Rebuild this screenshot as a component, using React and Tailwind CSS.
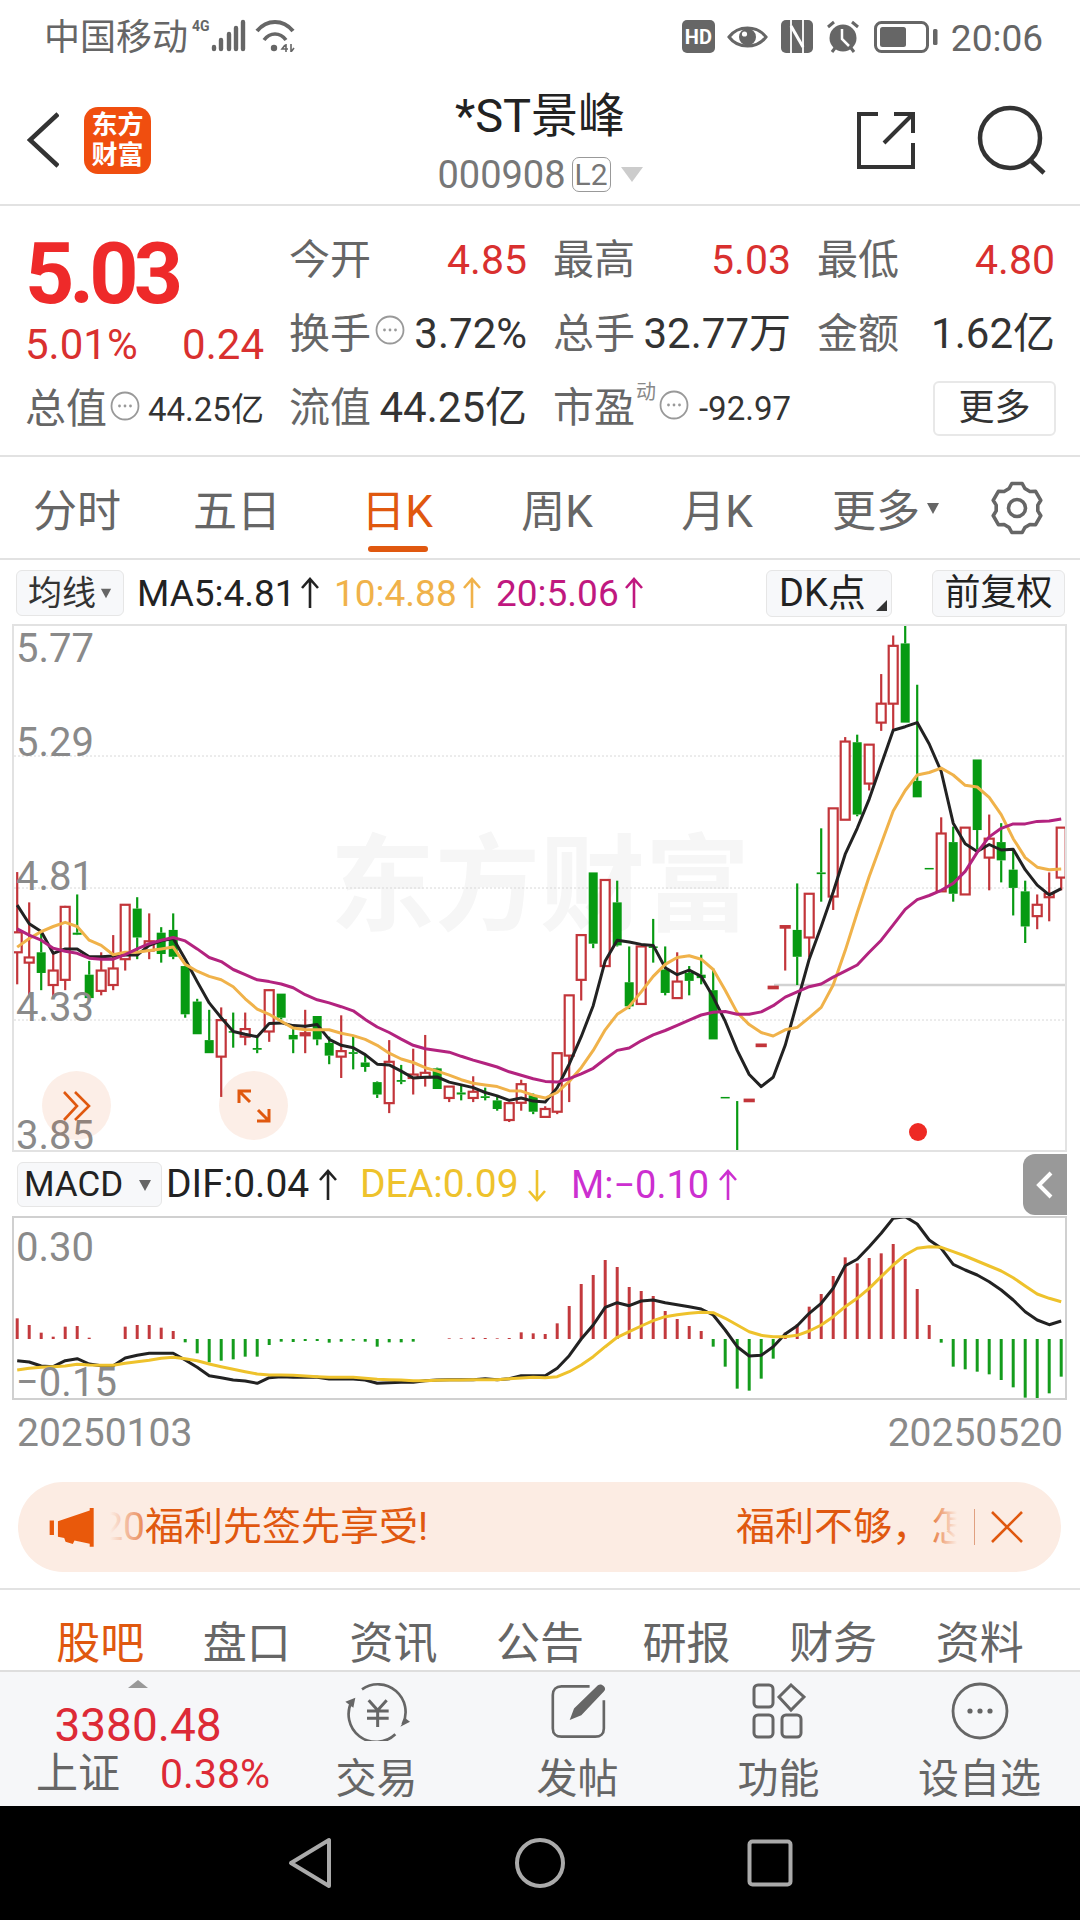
const RED = "#c2353a";
const GREEN = "#079a12";

// candles: [color, high, low, bodyTop, bodyBottom], measured in zoomed px
const candles = [
  ["r", 732, 1058, 907, 965], ["r", 820, 1090, 980, 995], ["g", 905, 1075, 965, 1025], ["r", 965, 1095, 1018, 1060],
  ["r", 830, 1075, 833, 1045], ["g", 797, 915, 908, 914], ["g", 990, 1100, 1030, 1098], ["r", 965, 1090, 1018, 1077],
  ["r", 915, 1075, 1012, 1060], ["r", 827, 1018, 827, 985], ["g", 805, 985, 838, 922], ["r", 852, 985, 933, 960],
  ["g", 892, 995, 908, 970], ["g", 852, 985, 900, 978], ["g", 1005, 1155, 1005, 1145], ["g", 1100, 1203, 1108, 1203],
  ["g", 1132, 1258, 1220, 1258], ["r", 1125, 1385, 1162, 1268], ["g", 1140, 1242, 1194, 1198], ["r", 1140, 1235, 1188, 1210],
  ["g", 1205, 1258, 1243, 1248], ["r", 1073, 1225, 1075, 1195], ["g", 1085, 1160, 1085, 1155], ["g", 1185, 1258, 1205, 1218],
  ["r", 1132, 1258, 1200, 1206], ["g", 1150, 1235, 1150, 1218], ["g", 1210, 1290, 1228, 1265], ["r", 1148, 1330, 1252, 1268],
  ["g", 1205, 1305, 1255, 1260], ["g", 1260, 1312, 1285, 1298], ["g", 1340, 1388, 1342, 1378], ["r", 1220, 1432, 1283, 1403],
  ["g", 1292, 1348, 1336, 1341], ["r", 1245, 1378, 1320, 1330], ["r", 1205, 1355, 1315, 1328], ["g", 1300, 1362, 1302, 1362],
  ["r", 1355, 1400, 1355, 1388], ["g", 1350, 1395, 1372, 1378], ["r", 1325, 1400, 1370, 1388], ["g", 1358, 1395, 1383, 1388],
  ["g", 1385, 1425, 1395, 1420], ["r", 1403, 1458, 1403, 1452], ["r", 1335, 1425, 1348, 1402], ["g", 1375, 1435, 1380, 1428],
  ["r", 1412, 1443, 1420, 1443], ["r", 1258, 1435, 1258, 1428], ["r", 1090, 1400, 1090, 1265], ["r", 915, 1105, 915, 1045],
  ["g", 733, 953, 733, 940], ["r", 755, 1005, 755, 1005], ["g", 757, 948, 820, 945], ["g", 948, 1130, 1052, 1122],
  ["r", 948, 1115, 948, 1115], ["g", 868, 995, 948, 952], ["g", 948, 1090, 1015, 1083], ["r", 965, 1100, 1050, 1098],
  ["g", 1005, 1090, 1025, 1048], ["g", 972, 1058, 1030, 1040], ["g", 1012, 1218, 1075, 1218], ["g", 1385, 1389, 1385, 1389],
  ["g", 1397, 1545, 1543, 1545], ["r", 1393, 1397, 1393, 1397], ["r", 1233, 1237, 1233, 1237], ["r", 1065, 1069, 1065, 1069],
  ["r", 890, 1018, 889, 891], ["g", 765, 1060, 900, 978], ["r", 795, 980, 795, 922], ["g", 605, 818, 733, 738],
  ["r", 547, 842, 547, 803], ["r", 340, 580, 353, 580], ["g", 333, 570, 355, 565], ["r", 362, 495, 362, 475],
  ["r", 157, 322, 243, 298], ["r", 45, 320, 75, 243], ["g", 13, 298, 68, 298], ["g", 188, 515, 467, 515],
  ["g", 720, 724, 720, 724], ["r", 573, 788, 620, 788], ["g", 600, 818, 645, 795], ["r", 603, 797, 603, 797],
  ["g", 405, 665, 405, 610], ["r", 565, 785, 635, 690], ["g", 590, 762, 645, 698], ["g", 670, 858, 725, 778],
  ["g", 757, 938, 788, 890], ["r", 797, 898, 827, 860], ["r", 733, 875, 795, 805], ["r", 603, 785, 603, 748],
];

const ma5 = [828, 882, 905, 968, 955, 955, 978, 978, 976, 973, 973, 945, 932, 925, 985, 1050, 1112, 1155, 1195, 1203, 1210, 1172, 1170, 1178, 1180, 1175, 1218, 1235, 1242, 1262, 1290, 1292, 1310, 1330, 1328, 1327, 1342, 1350, 1358, 1372, 1382, 1395, 1388, 1397, 1400, 1358, 1290, 1210, 1120, 990, 930, 935, 942, 945, 1010, 1030, 1017, 1035, 1095, 1165, 1250, 1320, 1355, 1328, 1235, 1110, 985, 890, 790, 680, 605, 520, 420, 320, 310, 298, 360, 440, 590, 650, 672, 652, 668, 666, 725, 770, 798, 780];
const ma10 = [950, 925, 905, 890, 878, 890, 930, 945, 972, 965, 965, 960, 955, 950, 1000, 1020, 1035, 1045, 1065, 1100, 1130, 1145, 1165, 1185, 1190, 1190, 1190, 1200, 1207, 1218, 1235, 1258, 1275, 1285, 1300, 1310, 1322, 1335, 1345, 1350, 1355, 1367, 1368, 1380, 1388, 1372, 1340, 1300, 1250, 1190, 1145, 1122, 1080, 1035, 1000, 980, 975, 985, 1015, 1075, 1140, 1175, 1198, 1208, 1190, 1183, 1155, 1125, 1060, 960, 850, 745, 650, 555, 495, 450, 443, 430, 450, 480, 485, 515, 565, 635, 690, 718, 725, 723];
const ma20 = [897, 915, 930, 953, 962, 968, 982, 985, 985, 972, 955, 940, 930, 922, 932, 955, 980, 992, 1015, 1030, 1045, 1050, 1057, 1068, 1088, 1103, 1112, 1123, 1135, 1160, 1182, 1198, 1217, 1235, 1245, 1250, 1255, 1267, 1278, 1288, 1298, 1312, 1322, 1332, 1340, 1342, 1332, 1318, 1302, 1275, 1250, 1243, 1222, 1205, 1192, 1177, 1162, 1147, 1139, 1137, 1145, 1145, 1138, 1120, 1095, 1080, 1065, 1057, 1037, 1020, 1002, 965, 930, 885, 840, 812, 800, 785, 765, 730, 675, 630, 605, 592, 592, 585, 584, 578];

// macd tips, zoomed px; null = no bar
const macdBars = [505, 525, 548, 560, 530, 528, 563, null, null, 530, 525, 525, 533, 543, 577, 610, 637, 632, 628, 620, 620, 585, 575, 576, 573, 573, 578, 575, 572, 575, 590, 577, 577, 575, null, null, 565, 565, 563, 564, 565, 564, 547, 550, 552, 520, 468, 402, 375, 330, 351, 411, 423, 438, 483, 507, 528, 543, 590, 650, 716, 722, 686, 626, 548, 523, 470, 432, 378, 322, 340, 324, 310, 282, 327, 417, 525, 578, 650, 658, 665, 673, 690, 712, 743, 747, 730, 680];
const dif = [632, 636, 648, 650, 632, 626, 642, 647, 647, 624, 616, 610, 610, 610, 630, 652, 677, 683, 690, 693, 700, 683, 680, 682, 682, 682, 687, 687, 687, 690, 700, 698, 697, 697, 692, 690, 689, 689, 689, 686, 689, 686, 677, 677, 677, 655, 617, 567, 525, 472, 458, 467, 453, 450, 458, 464, 470, 477, 495, 540, 590, 618, 616, 590, 552, 527, 490, 460, 415, 347, 328, 290, 250, 205, 200, 222, 270, 295, 343, 360, 375, 395, 420, 450, 485, 510, 524, 513];
const dea = [660, 655, 652, 650, 648, 643, 645, 646, 646, 640, 635, 631, 625, 622, 626, 632, 642, 650, 658, 665, 672, 675, 675, 676, 678, 680, 682, 682, 682, 685, 688, 689, 690, 692, 692, 691, 690, 690, 689, 689, 689, 686, 684, 682, 683, 680, 665, 645, 620, 590, 562, 545, 528, 512, 500, 494, 490, 487, 488, 505, 525, 545, 556, 560, 560, 556, 543, 525, 500, 470, 445, 415, 380, 345, 315, 295, 290, 292, 305, 318, 333, 348, 363, 383, 408, 432, 445, 455];

const xAt = (i) => 17.2 + 12 * i;
const kY = (z) => 620 + z / 2.904;
const mY = (z) => 1150 + z / 3;
const pts = (arr, toY) => arr.map((v, i) => `${xAt(i)},${toY(v).toFixed(1)}`).join(" ");

// six-tooth cog outline around 0,0
const gearPath = (() => {
  const p = [];
  for (let k = 0; k < 6; k++) {
    const a = -90 + 60 * k;
    [[21, -22], [25, -12], [25, 12], [21, 22]].forEach(([r, d]) => {
      const t = ((a + d) * Math.PI) / 180;
      p.push(`${(r * Math.cos(t)).toFixed(1)} ${(r * Math.sin(t)).toFixed(1)}`);
    });
  }
  return `M${p.join("L")}Z`;
})();

function KChart() {
  return (
    <svg width="1051" height="524" viewBox="14 626 1051 524" className="relative block">
      {[756, 888, 1020].map((y) => (
        <line key={y} x1="14" x2="1065" y1={y} y2={y} stroke="#d8d8d8" strokeWidth="1" strokeDasharray="2 2" />
      ))}
      <line x1="774" x2="1065" y1="985" y2="985" stroke="#d2d2d2" strokeWidth="2.5" />
      {candles.map(([c, hi, lo, top, bot], i) => {
        const x = xAt(i);
        const color = c === "r" ? RED : GREEN;
        const h = Math.max(kY(bot) - kY(top), 1.5);
        return (
          <g key={i}>
            <line x1={x} x2={x} y1={kY(hi)} y2={kY(top)} stroke={color} strokeWidth="2.2" />
            <line x1={x} x2={x} y1={kY(bot)} y2={kY(lo)} stroke={color} strokeWidth="2.2" />
            {c === "r" ? (
              <rect x={x - 4.5} y={kY(top)} width="9" height={h} fill="#fff" stroke={color} strokeWidth="2.2" />
            ) : (
              <rect x={x - 4.5} y={kY(top)} width="9" height={h} fill={color} />
            )}
          </g>
        );
      })}
      <polyline points={pts(ma5, kY)} fill="none" stroke="#222" strokeWidth="3" strokeLinejoin="round" />
      <polyline points={pts(ma10, kY)} fill="none" stroke="#f0b24a" strokeWidth="3" strokeLinejoin="round" />
      <polyline points={pts(ma20, kY)} fill="none" stroke="#b3237f" strokeWidth="3" strokeLinejoin="round" />
      <circle cx="918" cy="1132" r="9" fill="#ee2a24" />
    </svg>
  );
}

function MacdChart() {
  return (
    <svg width="1051" height="180" viewBox="14 1218 1051 180" className="block">
      {macdBars.map((tip, i) => {
        if (tip === null) return null;
        const y = mY(tip);
        const base = mY(567);
        return <line key={i} x1={xAt(i)} x2={xAt(i)} y1={y} y2={base} stroke={tip < 567 ? "#c3393d" : "#149c1c"} strokeWidth="3" />;
      })}
      <polyline points={pts(dif, mY)} fill="none" stroke="#222" strokeWidth="3" strokeLinejoin="round" />
      <polyline points={pts(dea, mY)} fill="none" stroke="#eec22c" strokeWidth="3" strokeLinejoin="round" />
    </svg>
  );
}

function Dots({ className = "" }) {
  return (
    <svg width="30" height="30" viewBox="0 0 30 30" className={className}>
      <circle cx="15" cy="15" r="13.5" fill="none" stroke="#999" strokeWidth="1.8" />
      <circle cx="9.5" cy="15" r="1.4" fill="#999" />
      <circle cx="15" cy="15" r="1.4" fill="#999" />
      <circle cx="20.5" cy="15" r="1.4" fill="#999" />
    </svg>
  );
}

function Arrow({ color, down = false, className = "" }) {
  return (
    <svg width="22" height="34" viewBox="0 0 22 34" className={className}>
      {down ? (
        <path d="M11 2V32M3 23L11 32L19 23" fill="none" stroke={color} strokeWidth="2.6" />
      ) : (
        <path d="M11 32V3M3 12L11 3L19 12" fill="none" stroke={color} strokeWidth="2.6" />
      )}
    </svg>
  );
}

function Caret({ className = "", size = 14 }) {
  return (
    <svg width={size} height={size} viewBox="0 0 14 14" className={className}>
      <path d="M1 2H13L7 13Z" fill="currentColor" />
    </svg>
  );
}

function Stat({ label, children, icon }) {
  return (
    <div className="flex h-[74px] w-[238px] items-center justify-between">
      <div className="flex items-center">
        <span className="text-[41px] leading-none text-[#666]">{label}</span>
        {icon}
      </div>
      {children}
    </div>
  );
}

function StatusIcons() {
  return (
    <div className="flex items-center">
      <div className="mb-[3px] flex items-center">
        <div className="flex h-[33px] w-[33px] items-center justify-center rounded-[5px] bg-[#666] text-[20px] font-bold leading-none text-white">HD</div>
        <svg width="41" height="22" viewBox="0 0 41 22" className="ml-[12px]">
          <path d="M2 11C11 -1 30 -1 39 11C30 23 11 23 2 11Z" fill="none" stroke="#666" strokeWidth="3" />
          <circle cx="20.5" cy="11" r="8.5" fill="#666" />
          <circle cx="17.5" cy="8" r="2.6" fill="#fff" />
        </svg>
        <svg width="32" height="33" viewBox="0 0 32 33" className="ml-[13px]">
          <rect width="32" height="33" rx="5" fill="#666" />
          <path d="M10 0V33M22 0V33" stroke="#fff" strokeWidth="1.8" />
          <path d="M10 6L22 27" stroke="#fff" strokeWidth="3" />
        </svg>
        <svg width="34" height="33" viewBox="0 0 34 33" className="ml-[13px]">
          <circle cx="17" cy="18" r="13.5" fill="#666" />
          <path d="M16 9V19L23 26" fill="none" stroke="#fff" strokeWidth="2.5" />
          <path d="M2 7L8 2M32 7L26 2M6 32L9 28M28 32L25 28" stroke="#666" strokeWidth="3" />
        </svg>
        <svg width="64" height="32" viewBox="0 0 64 32" className="ml-[14px]">
          <rect x="1.5" y="1.5" width="52" height="29" rx="6" fill="none" stroke="#666" strokeWidth="3" />
          <rect x="6" y="6" width="26" height="20" rx="2.5" fill="#666" />
          <rect x="59" y="8" width="4.5" height="16" rx="1.5" fill="#666" />
        </svg>
      </div>
      <span className="ml-[13px] text-[37px] leading-none text-[#666]">20:06</span>
    </div>
  );
}

function BottomItem({ label, children }) {
  return (
    <div className="flex flex-col items-center pt-[9px]">
      <div className="flex h-[60px] items-center justify-center">{children}</div>
      <span className="mt-[18px] text-[41px] leading-none text-[#666]">{label}</span>
    </div>
  );
}

export default function App() {
  return (
    <div className="flex h-[1920px] w-[1080px] flex-col overflow-hidden bg-white font-['Roboto','Noto_Sans_CJK_SC',sans-serif] text-[#222]">
      {/* status bar */}
      <div className="flex h-[64px] items-center justify-between pl-[44px] pr-[37px] pt-[12px]">
        <div className="flex items-center">
          <span className="text-[36px] leading-none text-[#666]">中国移动</span>
          <span className="ml-[4px] w-[18px] self-start text-[14px] font-bold leading-none text-[#666]">4G</span>
          <svg width="36" height="33" viewBox="0 0 36 33" className="mb-[5px]">
            <path d="M4 30V28M11 30V21M19 30V15M26 30V9M33 30V3" stroke="#666" strokeWidth="4.4" strokeLinecap="round" />
          </svg>
          <svg width="40" height="32" viewBox="0 0 40 32" className="mb-[4px] ml-[9px]">
            <path d="M2 11C12 -1 28 -1 38 11" fill="none" stroke="#666" strokeWidth="4" />
            <path d="M9 20C15 12 25 12 31 20" fill="none" stroke="#666" strokeWidth="3.6" />
            <circle cx="19" cy="28" r="3.2" fill="#666" />
            <path d="M30 25L27 29H33M31 24V32M36 24V32L39 28" fill="none" stroke="#666" strokeWidth="1.6" />
          </svg>
        </div>
        <StatusIcons />
      </div>

      {/* title */}
      <div className="grid h-[142px] grid-cols-[1fr_auto_1fr] items-center border-b-2 border-[#e2e2e2] pt-[12px]">
        <div className="flex items-center pl-[27px]">
          <svg width="32" height="56" viewBox="0 0 32 56">
            <path d="M31 2L3 28L31 54" fill="none" stroke="#333" strokeWidth="4.5" />
          </svg>
          <div className="ml-[25px] flex h-[67px] w-[67px] flex-col items-center justify-center rounded-[14px] bg-[#f04e0f] text-[26px] font-bold leading-[30px] text-white">
            <span>东方</span>
            <span>财富</span>
          </div>
        </div>
        <div className="flex flex-col items-center pt-[5px]">
          <span className="text-[47px] leading-none text-[#222]">*ST景峰</span>
          <div className="mt-[17px] flex items-center">
            <span className="text-[38px] leading-none text-[#777]">000908</span>
            <span className="ml-[6px] flex h-[35px] w-[39px] items-center justify-center rounded-[7px] border border-[#999] text-[30px] leading-none text-[#777]">L2</span>
            <span className="ml-[10px] h-0 w-0 border-x-[11px] border-t-[15px] border-x-transparent border-t-[#ccc]" />
          </div>
        </div>
        <div className="flex items-center justify-end gap-[61px] pr-[33px]">
          <svg width="60" height="60" viewBox="0 0 60 60">
            <path d="M22 4H3V57H57V33M28 33L57 4M38 4H57V23" fill="none" stroke="#333" strokeWidth="4" />
          </svg>
          <svg width="70" height="70" viewBox="0 0 70 70">
            <circle cx="33" cy="33" r="30" fill="none" stroke="#333" strokeWidth="4.5" />
            <path d="M52 54L67 68" stroke="#333" strokeWidth="4.5" />
          </svg>
        </div>
      </div>

      {/* quote */}
      <div className="flex h-[251px] border-b-2 border-[#e2e2e2] pt-[17px]">
        <div className="flex w-[289px] flex-col pl-[25px] pr-[25px]">
          <div className="mt-[12px] flex h-[78px] items-center text-[86px] font-bold leading-none tracking-[-5px] text-[#ee2a2a]">5.03</div>
          <div className="mt-[11px] flex h-[42px] items-center justify-between text-[42px] leading-none text-[#d9302f]">
            <span>5.01%</span>
            <span>0.24</span>
          </div>
          <div className="mt-[12px] flex h-[62px] items-center">
            <span className="text-[41px] leading-none text-[#666]">总值</span>
            <Dots className="mb-[6px] ml-[3px]" />
            <span className="ml-[8px] whitespace-nowrap text-[33px] leading-none text-[#333]">44.25亿</span>
          </div>
        </div>
        <div className="grid grid-cols-[238px_238px_238px] content-start gap-x-[26px]">
          <Stat label="今开"><span className="text-[41px] leading-none text-[#d9302f]">4.85</span></Stat>
          <Stat label="最高"><span className="text-[41px] leading-none text-[#d9302f]">5.03</span></Stat>
          <Stat label="最低"><span className="text-[41px] leading-none text-[#d9302f]">4.80</span></Stat>
          <Stat label="换手" icon={<Dots className="mb-[8px] ml-[4px]" />}><span className="text-[42px] leading-none text-[#333]">3.72%</span></Stat>
          <Stat label="总手"><span className="text-[42px] leading-none text-[#333]">32.77万</span></Stat>
          <Stat label="金额"><span className="text-[42px] leading-none text-[#333]">1.62亿</span></Stat>
          <Stat label="流值"><span className="text-[42px] leading-none text-[#333]">44.25亿</span></Stat>
          <div className="flex h-[74px] w-[238px] items-center justify-between">
            <div className="flex items-center">
              <span className="text-[41px] leading-none text-[#666]">市盈</span>
              <span className="mb-[32px] ml-[1px] text-[20px] leading-none text-[#888]">动</span>
              <Dots className="mb-[6px] ml-[3px]" />
            </div>
            <span className="text-[33px] leading-none text-[#333]">-92.97</span>
          </div>
          <div className="flex h-[74px] w-[238px] items-center justify-end">
            <span className="-mr-[1px] flex h-[55px] w-[123px] items-center justify-center rounded-[6px] border-2 border-[#e8e8e8] text-[36px] leading-none text-[#333]">更多</span>
          </div>
        </div>
      </div>

      {/* period tabs */}
      <div className="flex h-[103px] items-start border-b-2 border-[#e2e2e2] pl-[-3px]">
        <div className="-ml-[3px] grid grid-cols-[repeat(6,160px)] items-start">
          {["分时", "五日", "日K", "周K", "月K"].map((t) => (
            <div key={t} className="relative flex h-[101px] items-center justify-center">
              <span className={`pt-[8px] text-[44px] leading-none ${t === "日K" ? "text-[#e0580f]" : "text-[#666]"}`}>{t}</span>
              {t === "日K" && <span className="absolute bottom-[6px] left-[51px] h-[6px] w-[60px] rounded-full bg-[#e0580f]" />}
            </div>
          ))}
          <div className="flex h-[101px] items-center justify-center pl-[18px]">
            <span className="pt-[8px] text-[44px] leading-none text-[#666]">更多</span>
            <Caret className="ml-[6px] text-[#666]" size={14} />
          </div>
        </div>
        <div className="ml-[32px] flex h-[101px] items-center">
          <svg width="56" height="56" viewBox="-28 -28 56 56">
            <path d={gearPath} fill="none" stroke="#666" strokeWidth="3.6" strokeLinejoin="round" />
            <circle cx="0" cy="0" r="8.5" fill="none" stroke="#666" strokeWidth="3.6" />
          </svg>
        </div>
      </div>

      {/* ma legend */}
      <div className="flex h-[64px] items-center pl-[16px] pr-[15px] pt-[2px]">
        <div className="flex h-[46px] w-[108px] items-center justify-center rounded-[6px] border border-[#e6e6e6] bg-[#f7f8fa] text-[34px] leading-none text-[#333]">
          均线
          <Caret className="ml-[4px] text-[#666]" size={12} />
        </div>
        <span className="ml-[13px] w-[162px] whitespace-nowrap text-[37px] leading-none text-[#222]">MA5:4.81</span>
        <Arrow color="#222" />
        <span className="ml-[13px] w-[127px] whitespace-nowrap text-[37px] leading-none text-[#f0b24a]">10:4.88</span>
        <Arrow color="#f0b24a" />
        <span className="ml-[13px] w-[127px] whitespace-nowrap text-[37px] leading-none text-[#c0187f]">20:5.06</span>
        <Arrow color="#c0187f" />
        <div className="relative ml-auto flex h-[47px] w-[126px] items-center rounded-[6px] border border-[#e6e6e6] bg-[#f7f8fa] pl-[12px] text-[38px] leading-none text-[#222]">
          DK点
          <span className="absolute bottom-[5px] right-[4px] h-0 w-0 border-b-[11px] border-l-[11px] border-b-[#333] border-l-transparent" />
        </div>
        <div className="ml-[40px] flex h-[47px] w-[133px] items-center justify-center rounded-[6px] border border-[#e6e6e6] bg-[#f7f8fa] text-[36px] leading-none text-[#222]">前复权</div>
      </div>

      {/* k line */}
      <div className="relative ml-[12px] h-[528px] w-[1055px] border-2 border-[#e2e2e2]">
        <span className="absolute left-[316px] top-[208px] whitespace-nowrap text-[105px] font-bold leading-none text-[#f6f6f6]">东方财富</span>
        <KChart />
        <span className="absolute left-[2px] top-[3px] text-[40px] leading-none text-[#8a8a8a]">5.77</span>
        <span className="absolute left-[2px] top-[97px] text-[40px] leading-none text-[#8a8a8a]">5.29</span>
        <span className="absolute left-[2px] top-[231px] text-[40px] leading-none text-[#8a8a8a]">4.81</span>
        <span className="absolute left-[2px] top-[362px] text-[40px] leading-none text-[#8a8a8a]">4.33</span>
        <span className="absolute left-[2px] top-[490px] text-[40px] leading-none text-[#8a8a8a]">3.85</span>
        <div className="absolute left-[28px] top-[445px] flex h-[69px] w-[69px] items-center justify-center rounded-full bg-[#e0580f]/10">
          <svg width="30" height="32" viewBox="0 0 30 32">
            <path d="M2 2L15 16L2 30M13 2L27 16L13 30" fill="none" stroke="#e0580f" strokeWidth="2.6" />
          </svg>
        </div>
        <div className="absolute left-[205px] top-[445px] flex h-[69px] w-[69px] items-center justify-center rounded-full bg-[#e0580f]/10">
          <svg width="36" height="34" viewBox="0 0 36 34">
            <path d="M3 14V2H15M3 2L14 13M33 20V32H21M33 32L22 21" fill="none" stroke="#e0580f" strokeWidth="3" />
          </svg>
        </div>
      </div>

      {/* macd legend */}
      <div className="flex h-[64px] items-center pl-[17px] pr-[13px] pt-[1px]">
        <div className="flex h-[45px] w-[145px] items-center rounded-[6px] border border-[#e6e6e6] bg-[#f7f8fa] pl-[6px] text-[35px] leading-none text-[#222]">
          MACD
          <Caret className="ml-[15px] text-[#666]" size={14} />
        </div>
        <span className="ml-[4px] w-[151px] whitespace-nowrap text-[39px] leading-none text-[#222]">DIF:0.04</span>
        <Arrow color="#222" />
        <span className="ml-[21px] w-[166px] whitespace-nowrap text-[39px] leading-none text-[#eec22c]">DEA:0.09</span>
        <Arrow color="#eec22c" down />
        <span className="ml-[23px] w-[146px] whitespace-nowrap text-[38px] leading-none text-[#cc2fd0]">M:−0.10</span>
        <Arrow color="#cc2fd0" />
        <div className="ml-auto flex h-[61px] w-[44px] items-center justify-center rounded-l-[12px] bg-[#999]">
          <svg width="18" height="30" viewBox="0 0 18 30">
            <path d="M15 3L3 15L15 27" fill="none" stroke="#fff" strokeWidth="4" />
          </svg>
        </div>
      </div>

      {/* macd */}
      <div className="relative ml-[12px] h-[184px] w-[1055px] border-2 border-[#d0d0d0]">
        <MacdChart />
        <span className="absolute left-[2px] top-[10px] text-[40px] leading-none text-[#8a8a8a]">0.30</span>
        <span className="absolute left-[2px] top-[145px] text-[40px] leading-none text-[#8a8a8a]">−0.15</span>
      </div>

      {/* dates */}
      <div className="flex h-[66px] items-center justify-between pl-[17px] pr-[17px] text-[39px] leading-none text-[#8a8a8a]">
        <span>20250103</span>
        <span>20250520</span>
      </div>

      {/* notice */}
      <div className="mx-[18px] mt-[16px] flex h-[90px] w-[1043px] items-center rounded-full bg-[#fcece3] pl-[30px] pr-[37px] text-[39px] leading-none text-[#e0580f]">
        <svg width="48" height="43" viewBox="50 45 145 128" className="shrink-0">
          <path d="M55 88H68V132H55ZM80 90L176 58V50H188V167H176V158L130 148L125 159L103 152L99 141L80 137Z" fill="#e9590b" />
        </svg>
        <div className="relative ml-[14px] flex">
          <span className="flex w-[35px] justify-end overflow-hidden whitespace-nowrap">20</span>
          <span>福利先签先享受!</span>
          <span className="absolute left-0 top-0 h-full w-[36px] bg-gradient-to-r from-[#fcece3] to-[#fcece3]/30" />
        </div>
        <div className="relative ml-auto flex w-[221px] overflow-hidden whitespace-nowrap">
          <span>福利不够，怎</span>
          <span className="absolute right-0 top-0 h-full w-[30px] bg-gradient-to-l from-[#fcece3] to-[#fcece3]/10" />
        </div>
        <span className="ml-[17px] h-[36px] w-[1px] bg-[#e0a080]" />
        <svg width="34" height="34" viewBox="0 0 34 34" className="ml-[15px]">
          <path d="M2 2L32 32M32 2L2 32" stroke="#e0580f" strokeWidth="2.6" />
        </svg>
      </div>

      {/* bottom tabs */}
      <div className="mt-[16px] grid h-[82px] grid-cols-7 items-center border-t-2 border-[#e2e2e2] px-[27px] pt-[28px]">
        {["股吧", "盘口", "资讯", "公告", "研报", "财务", "资料"].map((t) => (
          <span key={t} className={`text-center text-[44px] leading-none ${t === "股吧" ? "text-[#e0580f]" : "text-[#666]"}`}>{t}</span>
        ))}
      </div>

      {/* toolbar */}
      <div className="flex h-[136px] border-t-2 border-[#dedede] bg-[#f6f7f9]">
        <div className="flex w-[276px] flex-col items-center pt-[8px]">
          <span className="h-0 w-0 border-x-[10px] border-b-[8px] border-x-transparent border-b-[#999]" />
          <span className="mt-[14px] text-[46px] leading-none text-[#dd2a36]">3380.48</span>
          <div className="mt-[5px] flex w-full items-center justify-between pl-[36px] pr-[6px]">
            <span className="text-[42px] leading-none text-[#666]">上证</span>
            <span className="text-[41px] leading-none text-[#dd2a36]">0.38%</span>
          </div>
        </div>
        <div className="grid flex-1 grid-cols-4">
          <BottomItem label="交易">
            <svg width="70" height="60" viewBox="30 20 210 180">
              <path d="M90 45A83 83 0 0 1 212 150M190 180A83 83 0 0 1 60 80" fill="none" stroke="#666" strokeWidth="8" />
              <path d="M205 157L234 142L220 132ZM40 82L70 70L64 100Z" fill="#666" />
              <path d="M110 78L137 108L164 78M105 110H170M105 132H170M137 108V158" fill="none" stroke="#666" strokeWidth="9" />
            </svg>
          </BottomItem>
          <BottomItem label="发帖">
            <svg width="60" height="59" viewBox="650 25 180 178">
              <path d="M775 38H690C674 38 664 48 664 64V165C664 181 674 190 690 190H792C808 190 818 181 818 165V80" fill="none" stroke="#666" strokeWidth="8" />
              <path d="M715 140L728 105L800 35C806 31 812 32 818 38C823 43 823 49 818 54L750 125Z" fill="#666" />
            </svg>
          </BottomItem>
          <BottomItem label="功能">
            <svg width="54" height="56" viewBox="0 0 54 56">
              <rect x="2" y="2" width="19" height="22" rx="4" fill="none" stroke="#666" strokeWidth="3" />
              <path d="M39 2L52 14L39 27L27 14Z" fill="none" stroke="#666" strokeWidth="3" />
              <rect x="2" y="32" width="19" height="22" rx="4" fill="none" stroke="#666" strokeWidth="3" />
              <rect x="30" y="32" width="19" height="22" rx="4" fill="none" stroke="#666" strokeWidth="3" />
            </svg>
          </BottomItem>
          <BottomItem label="设自选">
            <svg width="58" height="58" viewBox="0 0 58 58">
              <circle cx="29" cy="29" r="27" fill="none" stroke="#666" strokeWidth="2.8" />
              <circle cx="19" cy="29" r="2.6" fill="#666" />
              <circle cx="29" cy="29" r="2.6" fill="#666" />
              <circle cx="39" cy="29" r="2.6" fill="#666" />
            </svg>
          </BottomItem>
        </div>
      </div>

      {/* system nav */}
      <div className="flex flex-1 items-center justify-center bg-black">
        <svg width="46" height="52" viewBox="0 0 46 52">
          <path d="M42 3V49L4 26Z" fill="none" stroke="#aaa" strokeWidth="4" strokeLinejoin="round" />
        </svg>
        <svg width="52" height="52" viewBox="0 0 52 52" className="ml-[181px]">
          <circle cx="26" cy="26" r="23" fill="none" stroke="#aaa" strokeWidth="4" />
        </svg>
        <svg width="46" height="48" viewBox="0 0 46 48" className="ml-[181px]">
          <rect x="2.5" y="2.5" width="41" height="43" rx="3" fill="none" stroke="#aaa" strokeWidth="4" />
        </svg>
      </div>
    </div>
  );
}
